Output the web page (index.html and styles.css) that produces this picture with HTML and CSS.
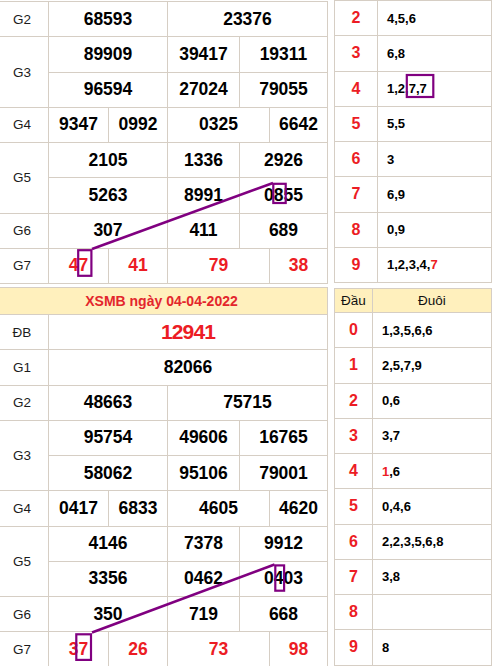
FILE: index.html
```html
<!DOCTYPE html>
<html lang="vi">
<head>
<meta charset="utf-8">
<title>XSMB</title>
<link rel="stylesheet" href="styles.css">
</head>
<body>
<div class="page">
  <section class="block">
    <div class="kq kq-top">
      <div class="cell lbl">G2</div><div class="cell n s2">68593</div><div class="cell n s3">23376</div>
      <div class="cell lbl r2">G3</div><div class="cell n s2">89909</div><div class="cell n">39417</div><div class="cell n s2">19311</div>
      <div class="cell n s2">96594</div><div class="cell n">27024</div><div class="cell n s2">79055</div>
      <div class="cell lbl">G4</div><div class="cell n">9347</div><div class="cell n">0992</div><div class="cell n s2">0325</div><div class="cell n">6642</div>
      <div class="cell lbl r2">G5</div><div class="cell n s2">2105</div><div class="cell n">1336</div><div class="cell n s2">2926</div>
      <div class="cell n s2">5263</div><div class="cell n">8991</div><div class="cell n s2">0855</div>
      <div class="cell lbl">G6</div><div class="cell n s2">307</div><div class="cell n">411</div><div class="cell n s2">689</div>
      <div class="cell lbl">G7</div><div class="cell n red">47</div><div class="cell n red">41</div><div class="cell n red s2">79</div><div class="cell n red">38</div>
    </div>
    <div class="lt lt-top">
      <div class="cell dau">2</div><div class="cell duoi">4,5,6</div>
      <div class="cell dau">3</div><div class="cell duoi">6,8</div>
      <div class="cell dau">4</div><div class="cell duoi">1,2,7,7</div>
      <div class="cell dau">5</div><div class="cell duoi">5,5</div>
      <div class="cell dau">6</div><div class="cell duoi">3</div>
      <div class="cell dau">7</div><div class="cell duoi">6,9</div>
      <div class="cell dau">8</div><div class="cell duoi">0,9</div>
      <div class="cell dau">9</div><div class="cell duoi">1,2,3,4,<span class="red">7</span></div>
    </div>
  </section>
  <section class="block">
    <div class="kq kq-bot">
      <div class="cell hd full">XSMB ngày 04-04-2022</div>
      <div class="cell lbl">ĐB</div><div class="cell n db s5">12941</div>
      <div class="cell lbl">G1</div><div class="cell n s5">82066</div>
      <div class="cell lbl">G2</div><div class="cell n s2">48663</div><div class="cell n s3">75715</div>
      <div class="cell lbl r2">G3</div><div class="cell n s2">95754</div><div class="cell n">49606</div><div class="cell n s2">16765</div>
      <div class="cell n s2">58062</div><div class="cell n">95106</div><div class="cell n s2">79001</div>
      <div class="cell lbl">G4</div><div class="cell n">0417</div><div class="cell n">6833</div><div class="cell n s2">4605</div><div class="cell n">4620</div>
      <div class="cell lbl r2">G5</div><div class="cell n s2">4146</div><div class="cell n">7378</div><div class="cell n s2">9912</div>
      <div class="cell n s2">3356</div><div class="cell n">0462</div><div class="cell n s2">0403</div>
      <div class="cell lbl">G6</div><div class="cell n s2">350</div><div class="cell n">719</div><div class="cell n s2">668</div>
      <div class="cell lbl">G7</div><div class="cell n red">37</div><div class="cell n red">26</div><div class="cell n red s2">73</div><div class="cell n red">98</div>
    </div>
    <div class="lt lt-bot">
      <div class="cell hd-r">Đầu</div><div class="cell hd-r">Đuôi</div>
      <div class="cell dau">0</div><div class="cell duoi">1,3,5,6,6</div>
      <div class="cell dau">1</div><div class="cell duoi">2,5,7,9</div>
      <div class="cell dau">2</div><div class="cell duoi">0,6</div>
      <div class="cell dau">3</div><div class="cell duoi">3,7</div>
      <div class="cell dau">4</div><div class="cell duoi"><span class="red">1</span>,6</div>
      <div class="cell dau">5</div><div class="cell duoi">0,4,6</div>
      <div class="cell dau">6</div><div class="cell duoi">2,2,3,5,6,8</div>
      <div class="cell dau">7</div><div class="cell duoi">3,8</div>
      <div class="cell dau">8</div><div class="cell duoi"></div>
      <div class="cell dau">9</div><div class="cell duoi">8</div>
    </div>
  </section>
  <svg class="marks" width="493" height="666" viewBox="0 0 493 666" aria-hidden="true">
    <g fill="none" stroke="#800080" stroke-width="2.2">
      <rect x="78.2" y="250.2" width="13.2" height="25.6"/>
      <line x1="92" y1="249" x2="273" y2="183" stroke-width="2.6"/>
      <rect x="273.3" y="183.8" width="12.4" height="19.2"/>
      <rect x="406.8" y="75" width="26.5" height="22"/>
      <rect x="76.3" y="634.3" width="14.7" height="25.6"/>
      <line x1="92" y1="632.5" x2="274.5" y2="564.5" stroke-width="2.6"/>
      <rect x="275.3" y="565.4" width="8.8" height="25.3"/>
    </g>
  </svg>
</div>
</body>
</html>
```

FILE: styles.css
```css
html, body {
  margin: 0;
  padding: 0;
  background: #ffffff;
}

body {
  font-family: "Liberation Sans", Arial, sans-serif;
  color: #000;
}

.page {
  position: relative;
  width: 493px;
  height: 666px;
  overflow: hidden;
}

.block {
  display: flex;
  align-items: flex-start;
  gap: 6px;
  margin-left: -5px;
}

.kq {
  display: grid;
  grid-template-columns: 52px 59px 58px 71px 29px 57px;
  gap: 1px;
  padding: 1px;
  background: #d6cec4;
  width: 333px;
  box-sizing: border-box;
  flex: none;
}

.kq-top {
  margin-top: 1px;
  grid-auto-rows: 34.25px;
}

.kq-bot {
  margin-top: 3px;
  grid-template-rows: 26px;
  grid-auto-rows: 34.25px;
}

.lt {
  display: grid;
  gap: 1px;
  padding: 1px;
  background: #d6cec4;
  width: 158px;
  box-sizing: border-box;
  flex: none;
}

.lt-top {
  grid-template-columns: 42px 113px;
  grid-auto-rows: 34.25px;
}

.lt-bot {
  margin-top: 4px;
  grid-template-columns: 37px 118px;
  grid-template-rows: 23px;
  grid-auto-rows: 34.25px;
}

.cell {
  background: #ffffff;
  display: flex;
  align-items: center;
  justify-content: center;
  white-space: nowrap;
}

.s2 { grid-column: span 2; }
.s3 { grid-column: span 3; }
.s5 { grid-column: span 5; }
.full { grid-column: 1 / -1; }
.r2 { grid-row: span 2; }

.lbl {
  font-size: 13.5px;
  color: #1c1c1c;
}

.n {
  font-weight: bold;
  font-size: 17.5px;
  color: #000;
}

.red { color: #ec1c24; }
.n.red { color: #ec1c24; }

.db {
  color: #ec1c24;
  font-size: 21px;
  letter-spacing: -0.9px;
}

.hd {
  background: #fff0bd;
  color: #e3262c;
  font-weight: bold;
  font-size: 14px;
}

.hd-r {
  background: #fff0bd;
  font-size: 13.5px;
  color: #111;
}

.dau {
  font-weight: bold;
  font-size: 16px;
  color: #ec1c24;
}

.duoi {
  justify-content: flex-start;
  padding-left: 9px;
  font-weight: bold;
  font-size: 13px;
  color: #000;
}

.marks {
  position: absolute;
  left: 0;
  top: 0;
  pointer-events: none;
}
```
